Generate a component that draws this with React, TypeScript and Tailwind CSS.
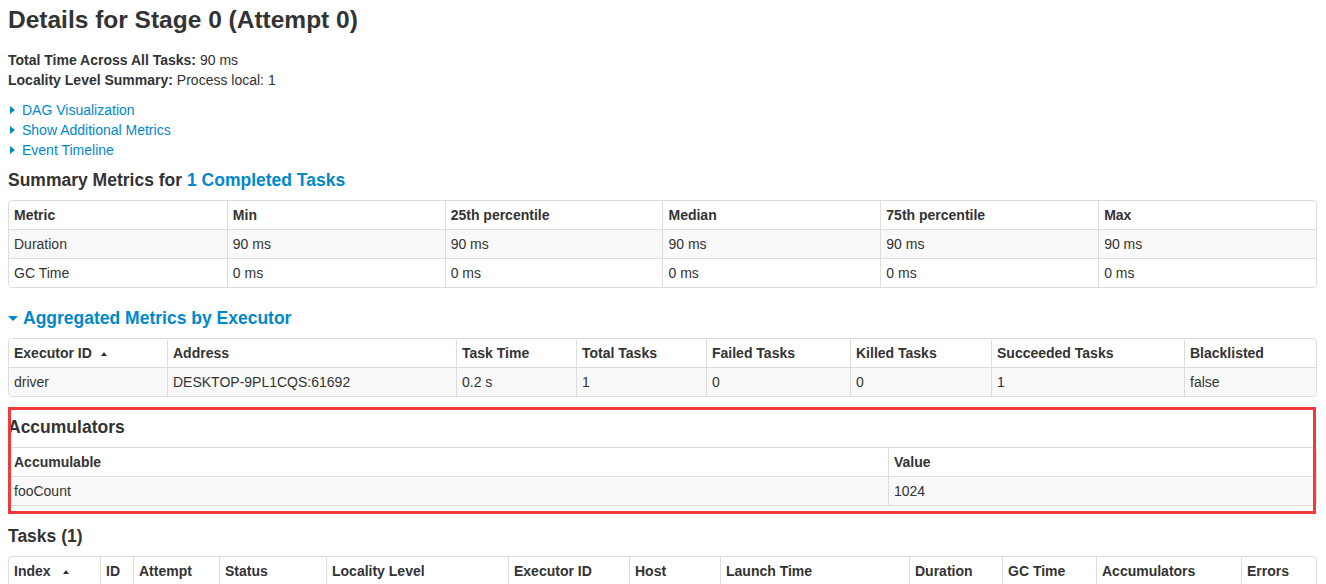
import React from "react";

type Col = { label: React.ReactNode; w: string };

function SortUp({ ml }: { ml: string }) {
  return (
    <span
      className={`inline-block w-0 h-0 border-x-[3px] border-x-transparent border-b-[4px] border-b-[#333] align-middle ${ml}`}
    />
  );
}

function DataTable({ cols, rows }: { cols: Col[]; rows: string[][] }) {
  return (
    <div className="border border-[#ddd] rounded-[4px] overflow-hidden">
      <table className="w-full table-fixed border-separate border-spacing-0 text-[14px] leading-5 text-[#333]">
        <thead>
          <tr>
            {cols.map((c, i) => (
              <th
                key={i}
                className={`${c.w} px-[5px] py-1 text-left font-bold align-top whitespace-nowrap ${
                  i > 0 ? "border-l border-[#ddd]" : ""
                }`}
              >
                {c.label}
              </th>
            ))}
          </tr>
        </thead>
        <tbody>
          {rows.map((r, ri) => (
            <tr key={ri} className={ri % 2 === 0 ? "bg-[#f9f9f9]" : "bg-white"}>
              {r.map((v, i) => (
                <td
                  key={i}
                  className={`px-[5px] py-1 text-left align-top border-t border-[#ddd] whitespace-nowrap ${
                    i > 0 ? "border-l" : ""
                  }`}
                >
                  {v}
                </td>
              ))}
            </tr>
          ))}
        </tbody>
      </table>
    </div>
  );
}

function LinkItem({ children }: { children: React.ReactNode }) {
  return (
    <li className="flex items-center h-5">
      <span className="inline-block w-0 h-0 ml-[2px] mr-[7px] border-y-[4px] border-y-transparent border-l-[5px] border-l-[#0088cc]" />
      <a className="text-[#0088cc] no-underline cursor-pointer">{children}</a>
    </li>
  );
}

export default function App() {
  const summaryCols: Col[] = [
    { label: "Metric", w: "" },
    { label: "Min", w: "" },
    { label: "25th percentile", w: "" },
    { label: "Median", w: "" },
    { label: "75th percentile", w: "" },
    { label: "Max", w: "" },
  ];
  const execCols: Col[] = [
    {
      label: (
        <>
          Executor ID
          <SortUp ml="ml-[9px]" />
        </>
      ),
      w: "w-[158px]",
    },
    { label: "Address", w: "w-[289px]" },
    { label: "Task Time", w: "w-[120px]" },
    { label: "Total Tasks", w: "w-[130px]" },
    { label: "Failed Tasks", w: "w-[144px]" },
    { label: "Killed Tasks", w: "w-[141px]" },
    { label: "Succeeded Tasks", w: "w-[193px]" },
    { label: "Blacklisted", w: "w-[132px]" },
  ];
  const accCols: Col[] = [
    { label: "Accumulable", w: "w-[879px]" },
    { label: "Value", w: "w-[428px]" },
  ];
  const taskCols: Col[] = [
    {
      label: (
        <>
          Index
          <SortUp ml="ml-[12px]" />
        </>
      ),
      w: "w-[91px]",
    },
    { label: "ID", w: "w-[33px]" },
    { label: "Attempt", w: "w-[86px]" },
    { label: "Status", w: "w-[107px]" },
    { label: "Locality Level", w: "w-[182px]" },
    { label: "Executor ID", w: "w-[121px]" },
    { label: "Host", w: "w-[91px]" },
    { label: "Launch Time", w: "w-[189px]" },
    { label: "Duration", w: "w-[93px]" },
    { label: "GC Time", w: "w-[94px]" },
    { label: "Accumulators", w: "w-[145px]" },
    { label: "Errors", w: "w-[75px]" },
  ];

  return (
    <div
      className="h-[584px] overflow-hidden bg-white text-[#333] text-[14px] leading-5 pl-2 pr-[9px]"
      style={{ fontFamily: '"Liberation Sans", Arial, sans-serif' }}
    >
      <h3 className="text-[24.5px] leading-[40px] h-[40px] font-bold mb-[10px]">
        Details for Stage 0 (Attempt 0)
      </h3>
      <div>
        <div>
          <strong className="font-bold">Total Time Across All Tasks: </strong>90 ms
        </div>
        <div>
          <strong className="font-bold">Locality Level Summary: </strong>Process local: 1
        </div>
      </div>
      <ul className="mt-[10px]">
        <LinkItem>DAG Visualization</LinkItem>
        <LinkItem>Show Additional Metrics</LinkItem>
        <LinkItem>Event Timeline</LinkItem>
      </ul>
      <h4 className="mt-[10px] mb-[10px] text-[17.5px] leading-5 font-bold">
        Summary Metrics for <a className="text-[#0088cc]">1 Completed Tasks</a>
      </h4>
      <DataTable
        cols={summaryCols}
        rows={[
          ["Duration", "90 ms", "90 ms", "90 ms", "90 ms", "90 ms"],
          ["GC Time", "0 ms", "0 ms", "0 ms", "0 ms", "0 ms"],
        ]}
      />
      <h4 className="mt-[20px] mb-[10px] text-[17.5px] leading-5 font-bold text-[#0088cc] flex items-center">
        <span className="inline-block w-0 h-0 mr-[5px] border-x-[5px] border-x-transparent border-t-[5px] border-t-[#0088cc]" />
        Aggregated Metrics by Executor
      </h4>
      <DataTable
        cols={execCols}
        rows={[["driver", "DESKTOP-9PL1CQS:61692", "0.2 s", "1", "0", "0", "1", "false"]]}
      />
      <div className="relative pt-[20px]">
        <h4 className="mb-[10px] text-[17.5px] leading-5 font-bold">Accumulators</h4>
        <DataTable cols={accCols} rows={[["fooCount", "1024"]]} />
        <div className="absolute left-0 top-[10px] right-[1px] h-[107px] border-[3px] border-[#ef3b3b] pointer-events-none" />
      </div>
      <h4 className="mt-[20px] mb-[10px] text-[17.5px] leading-5 font-bold">Tasks (1)</h4>
      <DataTable cols={taskCols} rows={[["0", "0", "0", "SUCCESS", "PROCESS_LOCAL", "driver", "localhost", "2019/01/01 00:00:00", "90 ms", "", "fooCount: 1024", ""]]} />
    </div>
  );
}
